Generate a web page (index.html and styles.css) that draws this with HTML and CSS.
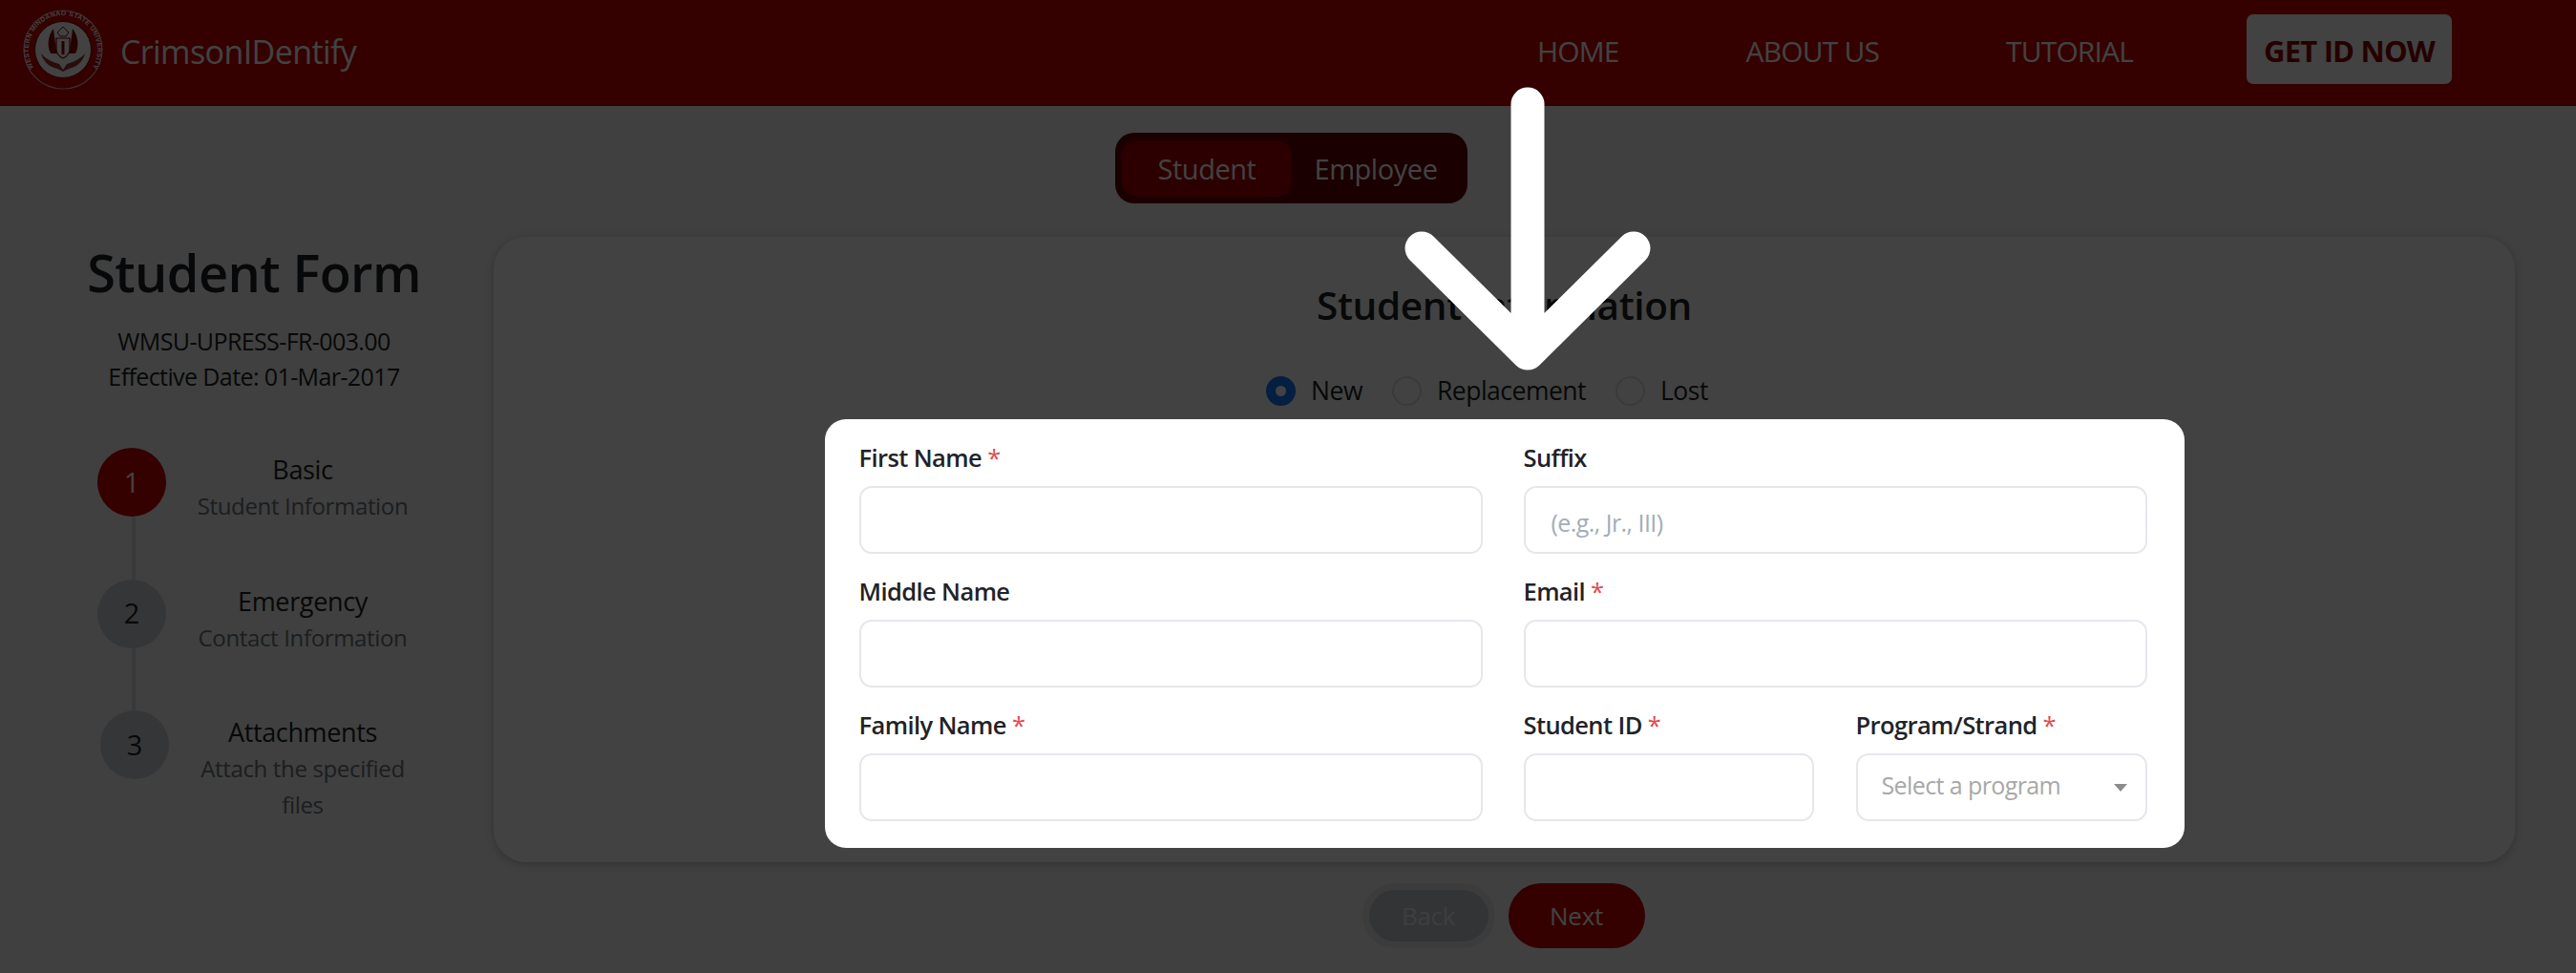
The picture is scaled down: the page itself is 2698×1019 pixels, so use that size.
FILE: index.html
```html
<!DOCTYPE html>
<html lang="en">
<head>
<meta charset="utf-8">
<title>CrimsonIDentify</title>
<link rel="stylesheet" href="styles.css">
</head>
<body>
<header class="topbar">
  <div class="brand">
    <svg class="seal" viewBox="0 0 84 84" aria-hidden="true">
      <defs><path id="sealArc" d="M16.5 67.5 A36 36 0 1 1 67.5 67.5"/></defs>
      <circle cx="42" cy="42" r="41" fill="#c80000" stroke="#e8b0b0" stroke-width="1.2"/>
      <circle cx="42" cy="42" r="29.5" fill="#fff" stroke="#8c0000" stroke-width="1"/>
      <text class="seal-text"><textPath href="#sealArc" startOffset="50%" text-anchor="middle">WESTERN MINDANAO STATE UNIVERSITY</textPath></text>
      <path d="M29 46c-4-8-3-18 3-26 1 8 2 18 4 26zM55 46c4-8 3-18-3-26-1 8-2 18-4 26z" fill="#8c0000"/>
      <path d="M35 30h14v12c0 5-3 7-7 9-4-2-7-4-7-9z" fill="#fff" stroke="#8c0000" stroke-width="1.2"/>
      <path d="M42 33v14" stroke="#8c0000" stroke-width="3"/>
      <path d="M36 24l6-6 6 6-3 4h-6z" fill="none" stroke="#8c0000" stroke-width="1"/>
      <path d="M19 46c5 6 12 9 19 11l4 6 4-6c7-2 14-5 19-11-2 8-8 14-17 16l-6 3-6-3c-9-2-15-8-17-16z" fill="#a53030"/>
    </svg>
    <span class="brand-name">CrimsonIDentify</span>
  </div>
  <nav class="nav">
    <a class="nav-link">HOME</a>
    <a class="nav-link">ABOUT US</a>
    <a class="nav-link">TUTORIAL</a>
    <a class="nav-cta">GET ID NOW</a>
  </nav>
</header>

<div class="toggle-row">
  <div class="toggle">
    <span class="toggle-item toggle-active">Student</span>
    <span class="toggle-item">Employee</span>
  </div>
</div>

<main class="layout">
  <aside class="sidebar">
    <h1 class="side-title">Student Form</h1>
    <p class="side-meta">WMSU-UPRESS-FR-003.00<br>Effective Date: 01-Mar-2017</p>
    <ol class="steps">
      <li class="step">
        <div class="marker"><span class="circle circle-active">1</span><span class="connector"></span></div>
        <div class="step-text"><strong class="step-title">Basic</strong><span class="step-sub">Student Information</span></div>
      </li>
      <li class="step">
        <div class="marker"><span class="circle">2</span><span class="connector"></span></div>
        <div class="step-text"><strong class="step-title">Emergency</strong><span class="step-sub">Contact Information</span></div>
      </li>
      <li class="step step-last">
        <div class="marker"><span class="circle">3</span></div>
        <div class="step-text"><strong class="step-title">Attachments</strong><span class="step-sub">Attach the specified files</span></div>
      </li>
    </ol>
  </aside>

  <section class="content">
    <div class="card">
      <h2 class="card-title">Student Information</h2>
      <div class="radios">
        <label class="radio"><span class="dot dot-on"></span>New</label>
        <label class="radio"><span class="dot"></span>Replacement</label>
        <label class="radio"><span class="dot"></span>Lost</label>
      </div>
      <form class="form">
        <div class="field"><label class="label">First Name <em class="req">*</em></label><input class="input" type="text"></div>
        <div class="field"><label class="label">Suffix</label><input class="input" type="text" placeholder="(e.g., Jr., III)"></div>
        <div class="field"><label class="label">Middle Name</label><input class="input" type="text"></div>
        <div class="field"><label class="label">Email <em class="req">*</em></label><input class="input" type="text"></div>
        <div class="field"><label class="label">Family Name <em class="req">*</em></label><input class="input" type="text"></div>
        <div class="pair">
          <div class="field"><label class="label">Student ID <em class="req">*</em></label><input class="input" type="text"></div>
          <div class="field"><label class="label">Program/Strand <em class="req">*</em></label>
            <div class="select"><span class="select-text">Select a program</span><span class="caret"></span></div>
          </div>
        </div>
        <svg class="pointer" viewBox="0 0 258 297" aria-hidden="true">
          <path d="M129 18V279M18 169L129 279L240 169" fill="none" stroke="#fff" stroke-width="35" stroke-linecap="round" stroke-linejoin="round"/>
        </svg>
      </form>
    </div>
    <div class="actions">
      <button class="btn btn-back" type="button">Back</button>
      <button class="btn btn-next" type="button">Next</button>
    </div>
  </section>
</main>
<div class="overlay"></div>
</body>
</html>
```
FILE: styles.css
```css
* { box-sizing: border-box; }
html, body { margin: 0; padding: 0; }
body {
  min-height: 100vh;
  overflow: hidden;
  background: #f5f5f5;
  color: #1b1f24;
  font-family: "Open Sans", "Noto Sans", sans-serif;
}
.overlay {
  position: fixed;
  inset: 0;
  z-index: 10;
  background: rgba(0, 0, 0, .74);
}

/* top bar */
.topbar {
  height: 111px;
  display: flex;
  align-items: center;
  justify-content: space-between;
  background: #c80000;
  color: #fff;
  padding: 0 130px 0 24px;
}
.brand { display: flex; align-items: center; gap: 18px; margin-bottom: 8px; }
.seal { width: 84px; height: 84px; display: block; }
.seal-text { font: 700 6.9px "Liberation Sans", sans-serif; fill: #fff; letter-spacing: .35px; }
.brand-name { padding-top: 4px; font-size: 34px; letter-spacing: -.6px; line-height: 1; color: #fff; }
.nav { display: flex; align-items: center; margin-bottom: 8px; }
.nav-link { margin-right: 133px; padding-top: 3px; font-size: 30px; letter-spacing: -.85px; color: #fff; }
.nav-link:nth-child(3) { margin-right: 119px; }
.nav-cta {
  width: 215px;
  height: 73px;
  display: flex;
  align-items: center;
  justify-content: center;
  padding-top: 3px;
  background: #fff;
  border-radius: 7px;
  color: #8c0000;
  font-size: 31px;
  font-weight: 700;
  letter-spacing: -.8px;
}

/* role toggle */
.toggle-row { display: flex; justify-content: center; padding: 28px 0 35px 7px; }
.toggle {
  width: 369px;
  height: 74px;
  display: flex;
  align-items: center;
  padding: 0 7px;
  background: #640000;
  border-radius: 20px;
}
.toggle-item {
  flex: 0 0 auto;
  width: 178px;
  height: 59px;
  display: flex;
  align-items: center;
  justify-content: center;
  border-radius: 16px;
  color: #fff;
  font-size: 29px;
  letter-spacing: -.45px;
}
.toggle-item + .toggle-item { width: 170px; padding-left: 6px; }
.toggle-active { background: #aa0000; }

/* two-column body */
.layout { display: flex; align-items: flex-start; padding: 0 64px 0 48px; gap: 33px; }
.sidebar { width: 436px; flex: 0 0 436px; text-align: center; }
.side-title { margin: 1px 0 18px; font-size: 54px; line-height: 72px; font-weight: 600; letter-spacing: -.55px; }
.side-meta { margin: 0; font-size: 25px; line-height: 37px; font-weight: 500; letter-spacing: -.6px; }
.steps { list-style: none; margin: 56px 0 0; padding: 0 0 0 54px; }
.step { display: flex; gap: 23px; height: 137.5px; text-align: center; }
.step-last { margin-left: 3px; }
.marker { display: flex; flex-direction: column; align-items: center; width: 72px; }
.circle {
  width: 72px;
  height: 72px;
  flex: 0 0 72px;
  display: flex;
  align-items: center;
  justify-content: center;
  padding-bottom: 2px;
  border-radius: 50%;
  background: #cdd2d7;
  font-size: 29px;
}
.circle-active { background: #c80000; color: #fff; }
.connector { width: 4px; height: 66px; margin-left: 4px; background: #d6dade; }
.step-text { width: 240px; display: flex; flex-direction: column; padding-top: 3px; }
.step-last .step-text { margin-left: -3px; }
.step-title { font-size: 27px; line-height: 39px; font-weight: 400; letter-spacing: -.35px; }
.step-sub { font-size: 24px; line-height: 37.5px; color: #6c757d; letter-spacing: -.35px; padding: 0 8px; }

/* form card */
.content { flex: 1 1 auto; min-width: 0; }
.card {
  height: 655px;
  padding-top: 44px;
  display: flex;
  flex-direction: column;
  align-items: center;
  background: #fff;
  border-radius: 34px;
  box-shadow: 0 2px 8px rgba(0, 0, 0, .22);
}
.card-title { margin: 0; font-size: 40.5px; line-height: 56px; font-weight: 600; letter-spacing: -.35px; }
.radios { display: flex; gap: 31px; height: 36px; margin-top: 43px; padding-right: 36px; align-self: center; }
.radio { display: flex; align-items: center; gap: 16px; font-size: 26.5px; font-weight: 500; letter-spacing: -.5px; }
.dot { width: 31px; height: 31px; border: 2px solid #e0e0e0; border-radius: 50%; background: #fff; }
.dot-on { border: 10px solid #1677ff; }

.form {
  position: relative;
  z-index: 20;
  width: 1424px;
  height: 449px;
  margin-top: 12px;
  padding: 22px 39px 0 36px;
  display: grid;
  grid-template-columns: 653px 653px;
  column-gap: 43px;
  row-gap: 21px;
  align-content: start;
  background: #fff;
  border-radius: 22px;
}
.field { display: flex; flex-direction: column; }
.pair { display: grid; grid-template-columns: 304px 305px; column-gap: 44px; }
.label { height: 38px; margin-bottom: 10px; font-size: 25.5px; line-height: 37px; font-weight: 600; letter-spacing: -.6px; color: #1f2328; }
.req { font-style: normal; color: #e5484d; font-weight: 400; }
.input {
  width: 100%;
  height: 71px;
  padding: 5px 27px 0;
  border: 2px solid #e5e7eb;
  border-radius: 13px;
  background: #fff;
  font: 400 25px "Open Sans", "Noto Sans", sans-serif;
  letter-spacing: -.55px;
  outline: none;
}
.input::placeholder { color: #a3adb8; opacity: 1; }
.select {
  height: 71px;
  display: flex;
  align-items: center;
  justify-content: space-between;
  padding: 0 19px 6px 25px;
  border: 2px solid #e5e7eb;
  border-radius: 13px;
}
.select-text { font-size: 25px; letter-spacing: -.6px; color: #a8a8a8; }
.caret { width: 0; height: 0; margin-top: 6px; border-left: 7px solid transparent; border-right: 7px solid transparent; border-top: 8px solid #8c8c8c; }
.pointer { position: absolute; left: 607px; top: -348px; width: 258px; height: 297px; pointer-events: none; }

/* wizard buttons */
.actions { display: flex; justify-content: center; gap: 14px; margin-top: 22px; padding-right: 2px; }
.btn {
  height: 68px;
  border-radius: 34px;
  font: 500 26px "Open Sans", "Noto Sans", sans-serif;
  letter-spacing: -.3px;
}
.btn-back { width: 139px; background: #c6cace; border: 7px solid #e6e9ec; color: #eef0f2; }
.btn-next { width: 143px; background: #c80000; border: 0; color: #fff; }
```
